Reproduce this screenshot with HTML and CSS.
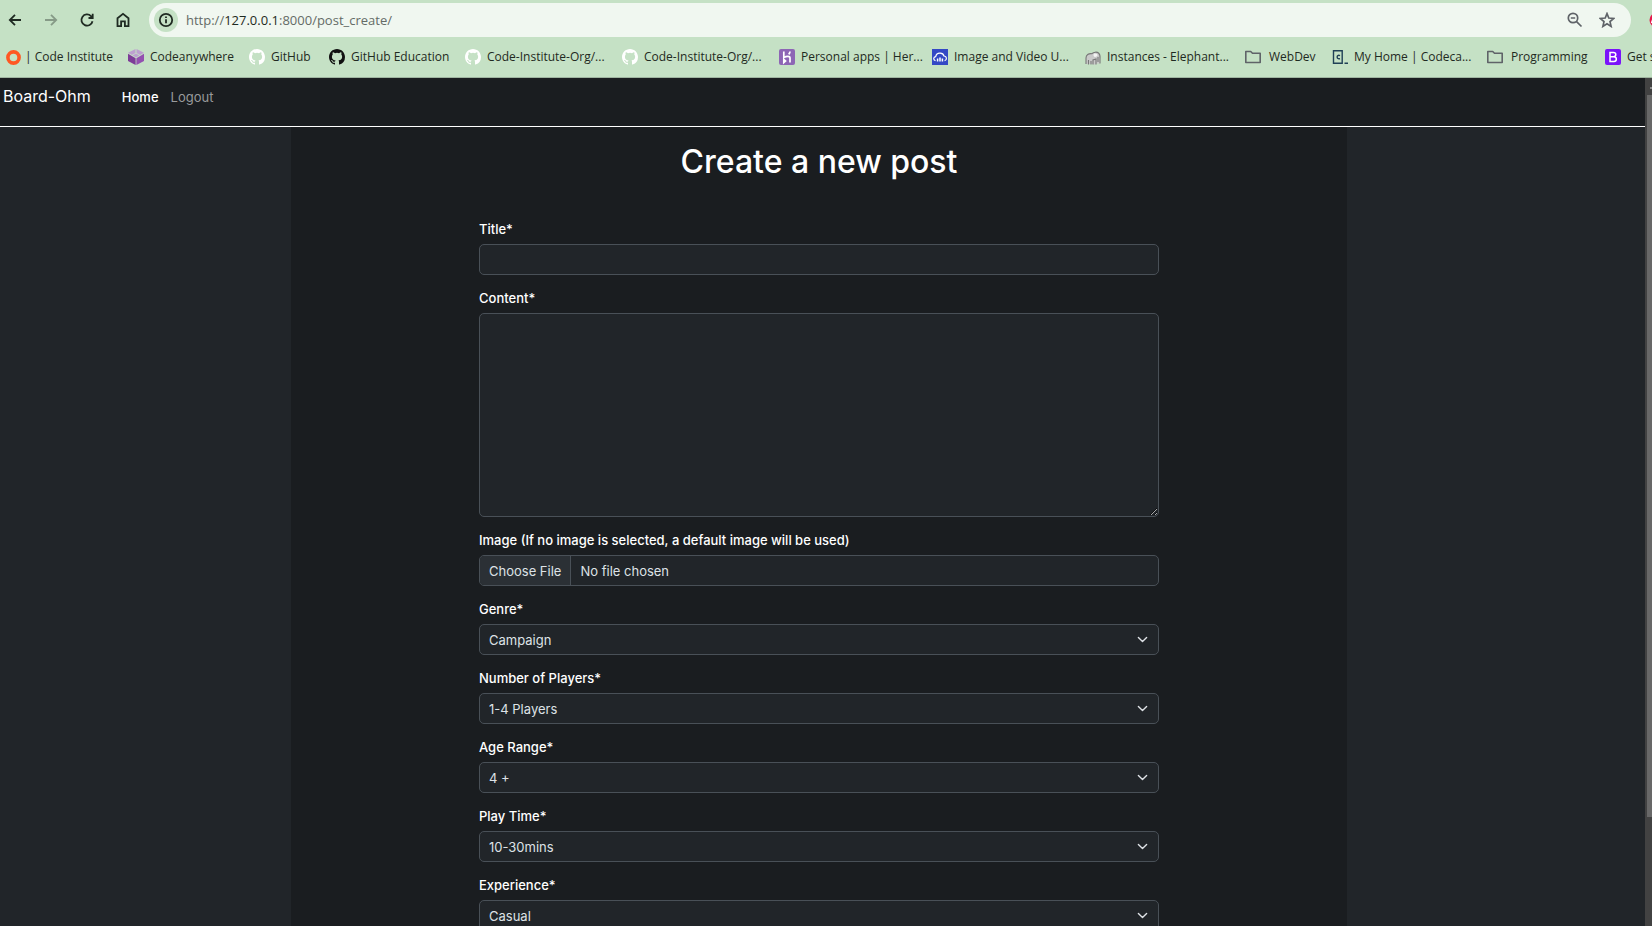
FILE: index.html
```html
<!DOCTYPE html>
<html lang="en">
<head>
<meta charset="utf-8">
<title>Board-Ohm</title>
<link rel="stylesheet" href="styles.css">
</head>
<body>
<svg class="defs" aria-hidden="true">
  <symbol id="github" viewBox="0 0 16 16"><path d="M8 0C3.58 0 0 3.58 0 8c0 3.54 2.29 6.53 5.47 7.59.4.07.55-.17.55-.38 0-.19-.01-.82-.01-1.49-2.01.37-2.53-.49-2.69-.94-.09-.23-.48-.94-.82-1.13-.28-.15-.68-.52-.01-.53.63-.01 1.08.58 1.23.82.72 1.21 1.87.87 2.33.66.07-.52.28-.87.51-1.07-1.78-.2-3.64-.89-3.64-3.95 0-.87.31-1.59.82-2.15-.08-.2-.36-1.02.08-2.12 0 0 .67-.21 2.2.82a7.6 7.6 0 0 1 4 0c1.53-1.04 2.2-.82 2.2-.82.44 1.1.16 1.92.08 2.12.51.56.82 1.27.82 2.15 0 3.07-1.87 3.75-3.65 3.95.29.25.54.73.54 1.48 0 1.07-.01 1.93-.01 2.2 0 .21.15.46.55.38A8.01 8.01 0 0 0 16 8c0-4.42-3.58-8-8-8z"/></symbol>
  <symbol id="folder" viewBox="0 0 16 16"><path d="M1.500 2.500h4.200l1.800 1.800h7.700v9.200H.8V2.500z" fill="none" stroke="#5f6368" stroke-width="1.600" stroke-linejoin="round"/></symbol>
</svg>

<header class="browser">
  <div class="toolbar">
    <button class="tool" aria-label="Back"><svg viewBox="0 0 16 16"><path d="M14 8H3M8 2.800 2.800 8 8 13.200"/></svg></button>
    <button class="tool tool-off" aria-label="Forward"><svg viewBox="0 0 16 16"><path d="M2 8h11M8 2.800 13.200 8 8 13.200"/></svg></button>
    <button class="tool" aria-label="Reload"><svg viewBox="0 0 16 16"><path d="M13.500 9.200A5.600 5.600 0 1 1 12 4.100L13.500 5.600M13.700 1.800v4.200H9.500"/></svg></button>
    <button class="tool" aria-label="Home page"><svg viewBox="0 0 16 16"><path d="M2.500 6.200 8 1.800l5.500 4.400v8H9.900V9.300H6.100v4.900H2.500z"/></svg></button>
    <div class="address">
      <button class="site-info" aria-label="Site information"><svg viewBox="0 0 16 16"><circle cx="8" cy="8" r="6.200"/><path d="M8 7.300v4M8 4.400v1.500"/></svg></button>
      <div class="url">http://<span>127.0.0.1</span>:8000/post_create/</div>
      <button class="action" aria-label="Zoom"><svg viewBox="0 0 16 16"><circle cx="6" cy="6" r="4.700"/><path d="M3.800 6h4.400M9.300 9.300l5.200 5.200"/></svg></button>
      <button class="action" aria-label="Bookmark this page"><svg viewBox="0 0 16 16"><path d="M8 1.600 9.800 6l4.900.4-3.700 3.200 1.100 4.800L8 11.800l-4.100 2.600L5 9.600 1.300 6.400 6.200 6z"/></svg></button>
    </div>
    <svg class="extension" viewBox="0 0 16 16"><circle cx="8" cy="8" r="7.500" fill="#e5174b"/><path d="M2.500 11 5 4.500 7 11" fill="none" stroke="#fff" stroke-width="1.500"/></svg>
  </div>
  <nav class="bookmarks" aria-label="Bookmarks">
    <a href="#" class="tight"><svg viewBox="0 0 16 16"><circle cx="7.500" cy="8.500" r="5.600" fill="none" stroke="#ff5722" stroke-width="3.600"/></svg>| Code Institute</a>
    <a href="#"><svg viewBox="0 0 16 16"><path fill="#bda0d0" d="M0 3.800 7.500 0v4L4 6zM16 3.800 8.500 0v4L12 6z"/><path fill="#bda0d0" d="m4.500 6.500 3.500-2 3.500 2L8 8.500z"/><path fill="#7d3c98" d="m0 4.800 7.600 4.400V16L0 12z"/><path fill="#9350b0" d="M16 4.800 8.400 9.200V16l7.600-4z"/></svg>Codeanywhere</a>
    <a href="#"><svg class="white" viewBox="0 0 16 16"><use href="#github"/></svg>GitHub</a>
    <a href="#"><svg class="black" viewBox="0 0 16 16"><use href="#github"/></svg>GitHub Education</a>
    <a href="#"><svg class="white" viewBox="0 0 16 16"><use href="#github"/></svg>Code-Institute-Org/...</a>
    <a href="#"><svg class="white" viewBox="0 0 16 16"><use href="#github"/></svg>Code-Institute-Org/...</a>
    <a href="#"><svg viewBox="0 0 16 16"><rect width="16" height="16" rx="2" fill="#8d65b5"/><path d="M4.800 2.500v6c2.500-1.300 6.200-1.800 6.200.5v4.500M11 2.500c0 1.200-.5 2-1.300 2.800M4.800 10.500v3l1.700-1.500z" fill="none" stroke="#fff" stroke-width="1.700"/></svg>Personal apps | Her...</a>
    <a href="#"><svg viewBox="0 0 16 16"><rect width="16" height="16" fill="#3448c5"/><path d="M3.500 11.700C1 10.700 1.200 8 3.700 7.600c.8-4.600 7.300-4.700 8.300-.6 3 .2 3.200 3.900.6 4.700" fill="none" stroke="#fff" stroke-width="1.200"/><path d="M5.600 9.500v3M8 8.500v4M10.400 9.500v3" stroke="#fff" stroke-width="1.500"/></svg>Image and Video U...</a>
    <a href="#"><svg viewBox="0 0 16 16"><path d="M1 15V9c0-3 2.500-4.800 6-4.300C8.500 3 12 2.600 13.500 4c2 1.500 1.600 4 1.500 6v4.500M3.500 15.500V11M6 15.500V12M8 15.500V11l3-1v5.500M13 8v5" fill="#c9c9c9" stroke="#777" stroke-width="1.100"/><path d="M9 4.500c-1.500 2 .5 4.500 2.500 3s1-3-2.500-3" fill="#f4f4f4"/></svg>Instances - Elephant...</a>
    <a href="#" class="wide"><svg viewBox="0 0 16 16"><use href="#folder"/></svg>WebDev</a>
    <a href="#"><svg viewBox="0 0 16 16"><path d="M1.500 1.800h8.700v12.400H1.500zM12.500 14.200H16M8 6.600C4.200 5 4.200 11 8 9.600" fill="none" stroke="#1f4056" stroke-width="1.400"/></svg>My Home | Codeca...</a>
    <a href="#" class="wide"><svg viewBox="0 0 16 16"><use href="#folder"/></svg>Programming</a>
    <a href="#"><svg viewBox="0 0 16 16"><rect width="16" height="16" rx="2" fill="#7a12fa"/><path d="M5 3.500h3.500c3 0 3 4 .2 4.200H5h4c3.200.2 3 4.700 0 4.700H5z" fill="none" stroke="#fff" stroke-width="1.500"/></svg>Get s</a>
  </nav>
</header>

<div class="viewport">
  <div class="page">
    <nav class="navbar" aria-label="Main">
      <a class="brand" href="#">Board-Ohm</a>
      <a class="active" href="#">Home</a>
      <a href="#">Logout</a>
    </nav>
    <main class="content">
      <section class="panel">
        <h1>Create a new post</h1>
        <form>
          <div class="field"><label for="title">Title*</label><input id="title" type="text"></div>
          <div class="field"><label for="body">Content*</label><textarea id="body" rows="10"></textarea></div>
          <div class="field"><label for="image">Image (If no image is selected, a default image will be used)</label><input id="image" type="file"></div>
          <div class="field"><label for="genre">Genre*</label><select id="genre"><option>Campaign</option></select></div>
          <div class="field"><label for="players">Number of Players*</label><select id="players"><option>1-4 Players</option></select></div>
          <div class="field"><label for="age">Age Range*</label><select id="age"><option>4 +</option></select></div>
          <div class="field"><label for="time">Play Time*</label><select id="time"><option>10-30mins</option></select></div>
          <div class="field"><label for="experience">Experience*</label><select id="experience"><option>Casual</option></select></div>
        </form>
      </section>
    </main>
  </div>
  <div class="scrollbar"><div class="arrow"></div><div class="thumb"></div></div>
</div>
</body>
</html>
```
FILE: styles.css
```css
* { box-sizing: border-box; }

body {
  margin: 0;
  height: 100vh;
  display: flex;
  flex-direction: column;
  overflow: hidden;
  background: #212529;
  font-family: Inter, "Liberation Sans", sans-serif;
}

button { border: 0; padding: 0; background: none; }
a { text-decoration: none; color: inherit; }
.defs { position: absolute; width: 0; height: 0; }

/* Browser chrome */
.browser {
  flex: none;
  background: #c5e1c5;
  border-bottom: 1px solid #9fb5a0;
  color: #1f2a22;
  font-family: "Open Sans", "Noto Sans", sans-serif;
  overflow: hidden;
}

.toolbar {
  display: flex;
  align-items: center;
  height: 40px;
  padding-left: 7px;
}

.tool { width: 16px; height: 16px; margin-right: 20px; }
.tool svg, .site-info svg, .action svg {
  display: block;
  width: 16px;
  height: 16px;
  fill: none;
  stroke: #1f2a22;
  stroke-width: 1.8;
}
.tool-off svg { stroke: #869a87; }
.tool:nth-of-type(4) { margin-right: 18px; }

.address {
  flex: 1;
  display: flex;
  align-items: center;
  height: 34px;
  padding: 0 16px 0 5px;
  border-radius: 17px;
  background: #f0f7f0;
}
.site-info {
  display: grid;
  place-items: center;
  width: 24px;
  height: 24px;
  border-radius: 50%;
  background: #c5e1c5;
}
.url { flex: 1; margin-left: 8px; font-size: 13px; color: #646b66; }
.url span { color: #1f2a22; }
.action { margin-left: 16px; }
.action svg { stroke: #5f6368; stroke-width: 1.7; }
.extension { flex: none; width: 16px; height: 16px; margin: 0 -13px 0 18px; }

.bookmarks {
  display: grid;
  grid-template-columns: 122px 121px 80px 136px 157px 157px 153px 153px 160px 87px 155px 118px 1fr;
  align-items: center;
  height: 37px;
  padding: 0 0 4px 6px;
  font-size: 12px;
  line-height: 16px;
  white-space: nowrap;
}
.bookmarks a { display: flex; align-items: center; gap: 6px; min-width: 0; }
.bookmarks .wide { gap: 8px; }
.bookmarks .tight { gap: 3px; }
.bookmarks svg { flex: none; width: 16px; height: 16px; }
.white { fill: #fff; }
.black { fill: #111; }

/* Site */
.viewport { flex: 1; display: flex; min-height: 0; }
.page {
  flex: 1;
  display: flex;
  flex-direction: column;
  overflow: hidden;
}

.navbar {
  flex: none;
  display: flex;
  align-items: baseline;
  gap: 12px;
  height: 49px;
  padding: 8px 3px;
  border-bottom: 1px solid #fff;
  background: #1a1d20;
  color: #989a9c;
  font-size: 13px;
}
.brand { margin-right: 19px; font-size: 16px; color: #fff; }
.navbar .active { color: #fff; font-weight: 500; }

.content {
  flex: 1;
  display: flex;
  justify-content: center;
  min-height: 0;
  padding-right: 7px;
}
.panel {
  width: 100%;
  max-width: 1056px;
  min-height: 100%;
  padding: 16px 16px 0;
  background: #1a1d20;
  color: #fff;
}
h1 {
  margin: 0 0 39px;
  font-size: 32px;
  line-height: 38px;
  font-weight: 500;
  text-align: center;
}
form { max-width: 680px; margin: 0 auto; }
.field { margin-bottom: 13px; }
label {
  display: block;
  margin-bottom: 5px;
  font-size: 13px;
  line-height: 19px;
  font-weight: 500;
}
.field + .field { margin-top: 14px; }
.field { margin-bottom: 0; }

input, textarea, select {
  display: block;
  width: 100%;
  height: 31px;
  padding: 6px 9px 4px;
  border: 1px solid #495057;
  border-radius: 5px;
  background-color: #212529;
  color: #dee2e6;
  font: 13px/19px Inter, "Liberation Sans", sans-serif;
}
textarea { height: 204px; resize: vertical; }
select {
  appearance: none;
  background-image: url("data:image/svg+xml,%3Csvg xmlns='http://www.w3.org/2000/svg' viewBox='0 0 16 16'%3E%3Cpath fill='none' stroke='%23dee2e6' stroke-linecap='round' stroke-linejoin='round' stroke-width='2' d='m2 5 6 6 6-6'/%3E%3C/svg%3E");
  background-repeat: no-repeat;
  background-position: right 10px center;
  background-size: 11px 11px;
}
input[type="file"] { overflow: hidden; }
input::file-selector-button {
  height: 29px;
  margin: -6px 9px -4px -9px;
  padding: 6px 9px 4px;
  border: 0;
  border-right: 1px solid #495057;
  background: #2b3035;
  color: #dee2e6;
  font: inherit;
}

.scrollbar { flex: none; width: 7px; padding-left: 2px; background: #424242; overflow: hidden; }
.arrow {
  height: 17px;
  padding-top: 9px;
}
.arrow::before {
  content: "";
  display: block;
  width: 8px;
  height: 2px;
  margin-left: 3px;
  background: #8a8a8a;
}
.thumb { height: 87%; max-height: 722px; background: #686868; }
```
